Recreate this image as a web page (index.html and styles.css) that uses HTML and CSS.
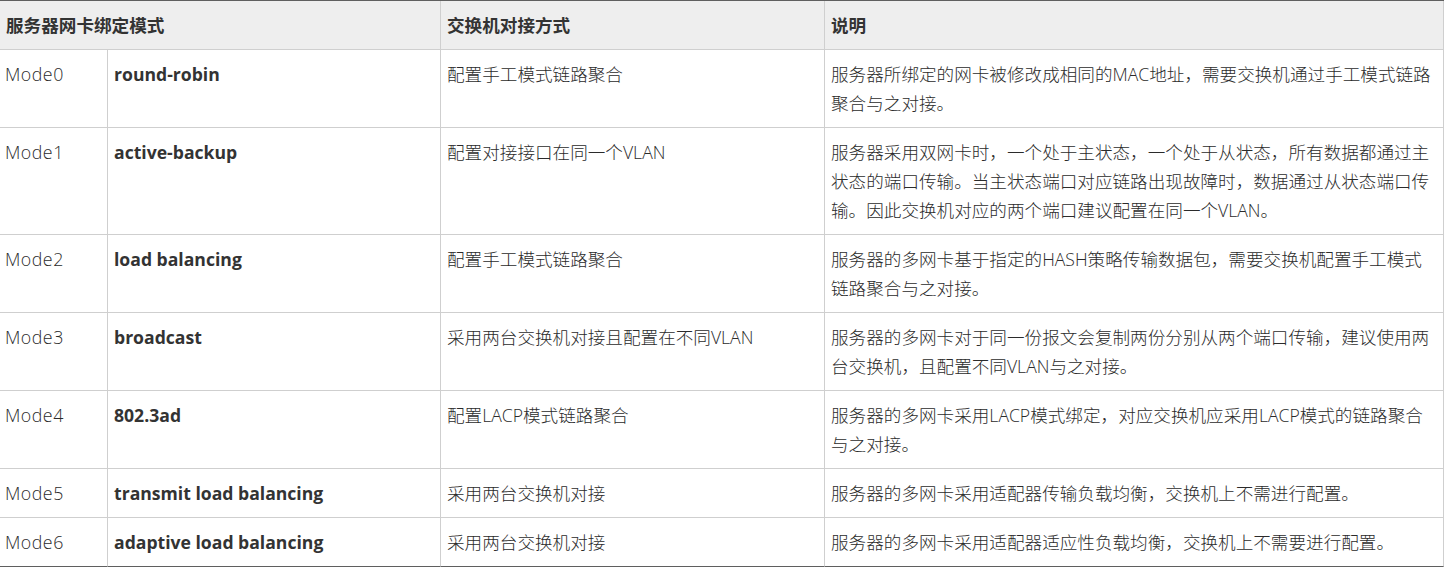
FILE: index.html
```html
<!DOCTYPE html>
<html lang="zh-CN">
<head>
<meta charset="utf-8">
<title>服务器网卡绑定模式</title>
<link rel="stylesheet" href="styles.css">
</head>
<body>
<table class="bond-table">
  <colgroup>
    <col class="c-mode">
    <col class="c-name">
    <col class="c-switch">
    <col class="c-desc">
  </colgroup>
  <thead>
    <tr>
      <th colspan="2">服务器网卡绑定模式</th>
      <th>交换机对接方式</th>
      <th>说明</th>
    </tr>
  </thead>
  <tbody>
    <tr>
      <td class="mode">Mode0</td>
      <td class="name">round-robin</td>
      <td>配置手工模式链路聚合</td>
      <td>服务器所绑定的网卡被修改成相同的MAC地址，需要交换机通过手工模式链路聚合与之对接。</td>
    </tr>
    <tr>
      <td class="mode">Mode1</td>
      <td class="name">active-backup</td>
      <td>配置对接接口在同一个VLAN</td>
      <td>服务器采用双网卡时，一个处于主状态，一个处于从状态，所有数据都通过主状态的端口传输。当主状态端口对应链路出现故障时，数据通过从状态端口传输。因此交换机对应的两个端口建议配置在同一个VLAN。</td>
    </tr>
    <tr>
      <td class="mode">Mode2</td>
      <td class="name">load balancing</td>
      <td>配置手工模式链路聚合</td>
      <td>服务器的多网卡基于指定的HASH策略传输数据包，需要交换机配置手工模式链路聚合与之对接。</td>
    </tr>
    <tr>
      <td class="mode">Mode3</td>
      <td class="name">broadcast</td>
      <td>采用两台交换机对接且配置在不同VLAN</td>
      <td>服务器的多网卡对于同一份报文会复制两份分别从两个端口传输，建议使用两台交换机，且配置不同VLAN与之对接。</td>
    </tr>
    <tr>
      <td class="mode">Mode4</td>
      <td class="name">802.3ad</td>
      <td>配置LACP模式链路聚合</td>
      <td>服务器的多网卡采用LACP模式绑定，对应交换机应采用LACP模式的链路聚合与之对接。</td>
    </tr>
    <tr>
      <td class="mode">Mode5</td>
      <td class="name">transmit load balancing</td>
      <td>采用两台交换机对接</td>
      <td>服务器的多网卡采用适配器传输负载均衡，交换机上不需进行配置。</td>
    </tr>
    <tr>
      <td class="mode">Mode6</td>
      <td class="name">adaptive load balancing</td>
      <td>采用两台交换机对接</td>
      <td>服务器的多网卡采用适配器适应性负载均衡，交换机上不需要进行配置。</td>
    </tr>
  </tbody>
</table>
</body>
</html>
```

FILE: styles.css
```css
html, body {
  margin: 0;
  padding: 0;
  background: #fff;
}

body {
  font-family: "Open Sans", "Noto Sans CJK SC", sans-serif;
  font-size: 17.6px;
  line-height: 29px;
  color: #333;
}

.bond-table {
  width: 1444px;
  table-layout: fixed;
  border-collapse: separate;
  border-spacing: 0;
  border-top: 1px solid #5f5f5f;
}

.c-mode { width: 108px; }
.c-name { width: 333px; }
.c-switch { width: 384px; }
.c-desc { width: 619px; }

.bond-table th,
.bond-table td {
  padding: 10px 6px 9px 6px;
  text-align: left;
  vertical-align: top;
  border-right: 1px solid #cfcfcf;
  border-bottom: 1px solid #cfcfcf;
}

.bond-table th {
  background: #eeeeee;
  font-weight: 700;
  color: #333;
}

.bond-table td {
  font-weight: 300;
  color: #2b2b2b;
}

.bond-table td.mode {
  padding-left: 5px;
  font-size: 17.8px;
  letter-spacing: 0.5px;
  font-weight: 300;
  color: #2b2b2b;
}

.bond-table td.name {
  font-weight: 700;
  color: #333;
}

.bond-table tbody tr:last-child td {
  border-bottom-color: #5f5f5f;
}
```
